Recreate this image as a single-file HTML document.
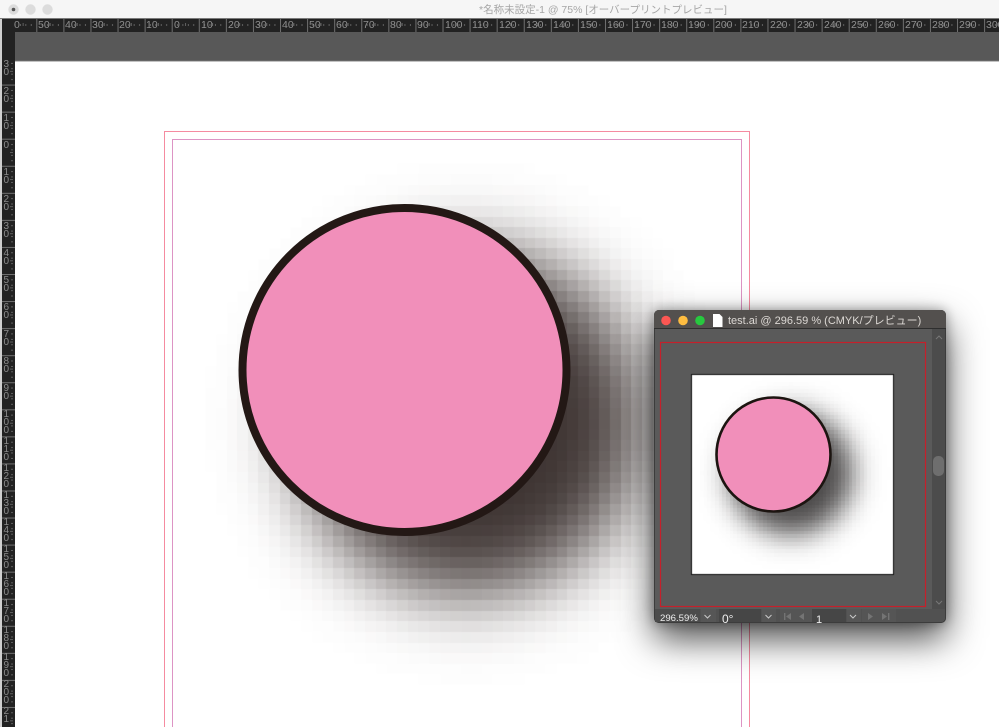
<!DOCTYPE html>
<html lang="ja"><head><meta charset="utf-8"><title>InDesign</title>
<style>
html,body{margin:0;padding:0;width:999px;height:727px;overflow:hidden;background:#fff;font-family:"Liberation Sans","Noto Sans CJK JP",sans-serif}
.a{position:absolute;display:block}
#stage{position:absolute;left:0;top:0;width:999px;height:727px;overflow:hidden}
#fb{position:absolute;left:300px;top:254px;width:336px;height:336px;border-radius:50%;background:#3a302e;filter:blur(36px)}
.win{position:absolute;left:654px;top:310px;width:292px;height:313px;background:#5a5a5a;border-radius:5px;box-shadow:0 16px 36px rgba(0,0,0,.7),0 0 12px rgba(0,0,0,.35),inset 0 0 0 1px #3c3c3c}
</style></head><body>
<div id="stage">
<div id="fb"></div>
<canvas id="c" class="a" width="999" height="727" style="left:0;top:0"></canvas>

<svg class="a" style="left:0;top:0" width="999" height="727" xmlns="http://www.w3.org/2000/svg">
<defs>
<pattern id="tt" x="171.7" y="0" width="27.08" height="13" patternUnits="userSpaceOnUse">
<rect x="0" y="0" width="1" height="13" fill="#707070"/>
<g fill="#6e6e6e"><rect x="5.4" y="11" width=".8" height="2"/><rect x="10.8" y="11" width=".8" height="2"/><rect x="13.5" y="10" width=".8" height="3"/><rect x="16.2" y="11" width=".8" height="2"/><rect x="21.6" y="11" width=".8" height="2"/></g>
</pattern>
<pattern id="tl" x="0" y="138.7" width="13" height="27.06" patternUnits="userSpaceOnUse">
<rect x="0" y="0" width="13" height="1" fill="#707070"/>
<g fill="#6e6e6e"><rect x="11" y="5.4" width="2" height=".8"/><rect x="11" y="10.8" width="2" height=".8"/><rect x="10" y="13.5" width="3" height=".8"/><rect x="11" y="16.2" width="2" height=".8"/><rect x="11" y="21.6" width="2" height=".8"/></g>
</pattern>
</defs>
<!-- page guides -->
<g fill="none">
<path d="M164.5 727V131.5H749.5V727" stroke="#f58ba0"/>
<path d="M172.5 727V139.5H741.5V727" stroke="#dd94c4"/>
</g>
<!-- big circle -->
<circle cx="404.5" cy="370" r="162" fill="#f18fba" stroke="#231815" stroke-width="8"/>
<!-- title bar -->
<rect x="0" y="0" width="999" height="18" fill="#f6f6f6"/>
<rect x="0" y="18" width="999" height="1" fill="#7a7a7a"/>
<circle cx="13.5" cy="9.5" r="5.2" fill="#dcdcdc"/><circle cx="13.5" cy="9.5" r="1.8" fill="#555"/>
<circle cx="30.5" cy="9.5" r="5.2" fill="#dcdcdc"/>
<circle cx="47.5" cy="9.5" r="5.2" fill="#dcdcdc"/>
<text x="479" y="13" font-size="10.5" fill="#a6a6a6" font-family="'Liberation Sans','Noto Sans CJK JP',sans-serif">*名称未設定-1 @ 75% [オーバープリントプレビュー]</text>
<!-- pasteboard -->
<rect x="15" y="31" width="984" height="29" fill="#585858"/>
<rect x="15" y="60" width="984" height="1.4" fill="#666"/>
<!-- top ruler -->
<rect x="2" y="19" width="997" height="13" fill="#222"/>
<rect x="15" y="19" width="984" height="13" fill="url(#tt)"/>
<rect x="2" y="32" width="13" height="29" fill="#222"/>
<g font-size="10.5" fill="#8e8e8e" font-family="'Liberation Sans',sans-serif">
<text x="14" y="28">0</text><text x="38" y="28">50</text><text x="65" y="28">40</text><text x="92" y="28">30</text><text x="119" y="28">20</text><text x="146" y="28">10</text><text x="174" y="28">0</text><text x="201" y="28">10</text><text x="228" y="28">20</text><text x="255" y="28">30</text><text x="282" y="28">40</text><text x="309" y="28">50</text><text x="336" y="28">60</text><text x="363" y="28">70</text><text x="390" y="28">80</text><text x="417" y="28">90</text><text x="445" y="28">100</text><text x="472" y="28">110</text><text x="499" y="28">120</text><text x="526" y="28">130</text><text x="553" y="28">140</text><text x="580" y="28">150</text><text x="607" y="28">160</text><text x="634" y="28">170</text><text x="661" y="28">180</text><text x="688" y="28">190</text><text x="715" y="28">200</text><text x="742" y="28">210</text><text x="770" y="28">220</text><text x="797" y="28">230</text><text x="824" y="28">240</text><text x="851" y="28">250</text><text x="878" y="28">260</text><text x="905" y="28">270</text><text x="932" y="28">280</text><text x="959" y="28">290</text><text x="986" y="28">300</text>
</g>
<!-- left ruler -->
<rect x="2" y="61" width="13" height="666" fill="#222"/>
<rect x="2" y="61" width="13" height="666" fill="url(#tl)"/>
<rect x="0" y="19" width="2" height="708" fill="#cfcfcf"/>
<g font-size="10" fill="#8c8c8c" font-family="'Liberation Sans',sans-serif" transform="translate(0.5,-1)">
<text x="3" y="68">3</text><text x="3" y="76">0</text>
<text x="3" y="95">2</text><text x="3" y="103">0</text>
<text x="3" y="122">1</text><text x="3" y="130">0</text>
<text x="3" y="149">0</text>
<text x="3" y="176">1</text><text x="3" y="184">0</text>
<text x="3" y="203">2</text><text x="3" y="211">0</text>
<text x="3" y="230">3</text><text x="3" y="238">0</text>
<text x="3" y="257">4</text><text x="3" y="265">0</text>
<text x="3" y="284">5</text><text x="3" y="292">0</text>
<text x="3" y="311">6</text><text x="3" y="319">0</text>
<text x="3" y="338">7</text><text x="3" y="346">0</text>
<text x="3" y="365">8</text><text x="3" y="373">0</text>
<text x="3" y="392">9</text><text x="3" y="400">0</text>
<text x="3" y="418">1</text><text x="3" y="426">0</text><text x="3" y="434">0</text>
<text x="3" y="445">1</text><text x="3" y="453">1</text><text x="3" y="461">0</text>
<text x="3" y="472">1</text><text x="3" y="480">2</text><text x="3" y="488">0</text>
<text x="3" y="499">1</text><text x="3" y="507">3</text><text x="3" y="515">0</text>
<text x="3" y="526">1</text><text x="3" y="534">4</text><text x="3" y="542">0</text>
<text x="3" y="553">1</text><text x="3" y="561">5</text><text x="3" y="569">0</text>
<text x="3" y="580">1</text><text x="3" y="588">6</text><text x="3" y="596">0</text>
<text x="3" y="607">1</text><text x="3" y="615">7</text><text x="3" y="623">0</text>
<text x="3" y="634">1</text><text x="3" y="642">8</text><text x="3" y="650">0</text>
<text x="3" y="661">1</text><text x="3" y="669">9</text><text x="3" y="677">0</text>
<text x="3" y="688">2</text><text x="3" y="696">0</text><text x="3" y="704">0</text>
<text x="3" y="715">2</text><text x="3" y="723">1</text>
</g>
</svg>

<div class="win"></div>
<canvas id="c2" class="a" width="999" height="727" style="left:0;top:0"></canvas>
<svg class="a" style="left:0;top:0" width="999" height="727" xmlns="http://www.w3.org/2000/svg">
<!-- small window title -->
<path d="M654 328V315a5 5 0 0 1 5-5H941a5 5 0 0 1 5 5V328Z" fill="#53504e"/>
<rect x="654" y="328" width="292" height="1" fill="#2e2e2e"/>
<circle cx="666" cy="320.5" r="4.8" fill="#fc5753"/>
<circle cx="683" cy="320.5" r="4.8" fill="#fdbc40"/>
<circle cx="700" cy="320.5" r="4.8" fill="#27c93f"/>
<path d="M713 314H719.5L722.5 317V327H713Z" fill="#fff"/>
<text x="728" y="324" font-size="11" fill="#dcd8d4" font-family="'Liberation Sans','Noto Sans CJK JP',sans-serif">test.ai @ 296.59 % (CMYK/プレビュー)</text>
<!-- scrollbar -->
<rect x="932" y="329" width="13" height="280" fill="#4c4c4c"/>
<path d="M936 339l3-3 3 3" fill="none" stroke="#777" stroke-width="1"/>
<path d="M936 601l3 3 3-3" fill="none" stroke="#777" stroke-width="1"/>
<rect x="933" y="456" width="11" height="20" rx="5" fill="#6e6e6e"/>
<!-- artboard -->
<rect x="660.5" y="342.5" width="265" height="264" fill="none" stroke="#c5202b" stroke-width="1.2"/>
<!-- status bar -->
<path d="M655 609H945V618a4 4 0 0 1-4 4H659a4 4 0 0 1-4-4Z" fill="#515151"/>
<rect x="655" y="609" width="45" height="13" fill="#4c4c4c"/>
<rect x="719" y="609" width="42" height="13" fill="#464646"/>
<rect x="812" y="609" width="34" height="13" fill="#464646"/>
<rect x="701" y="609" width="15" height="13" fill="#565656"/>
<rect x="762" y="609" width="14" height="13" fill="#565656"/>
<rect x="847" y="609" width="14" height="13" fill="#565656"/>
<rect x="780" y="609" width="32" height="13" fill="#555"/>
<rect x="862" y="609" width="34" height="13" fill="#555"/>
<g fill="none" stroke="#c8c8c8" stroke-width="1"><path d="M704.5 615l3 3 3-3"/><path d="M765.5 615l3 3 3-3"/><path d="M850 615l3 3 3-3"/></g>
<g fill="#747474"><rect x="784" y="613" width="1.4" height="7"/><path d="M791 613v7l-5-3.5Z"/><path d="M804 613v7l-5-3.5Z"/><path d="M868 613v7l5-3.5Z"/><path d="M882 613v7l5-3.5Z"/><rect x="888" y="613" width="1.4" height="7"/></g>
<g font-family="'Liberation Sans',sans-serif" fill="#eee">
<text x="660" y="621" font-size="9.6">296.59%</text>
<text x="722" y="623" font-size="12">0°</text>
<text x="816" y="623" font-size="11">1</text>
</g>
<!-- small circle -->
<circle cx="773.5" cy="454.5" r="57" fill="#f18fba" stroke="#1c1410" stroke-width="2.6"/>
</svg>
</div>
<script>
function erf(x){var s=x<0?-1:1;x=Math.abs(x);var t=1/(1+0.5*x);
var r=1-t*Math.exp(-x*x-1.26551223+t*(1.00002368+t*(0.37409196+t*(0.09678418+t*(-0.18628806+t*(0.27886807+t*(-1.13520398+t*(1.48851587+t*(-0.82215223+t*0.17087277)))))))));
return s*r;}
function shadow(ctx,ox,oy,step,cx,cy,R,sig,x1,y1,x2,y2,col,maxA){
 for(var i=Math.floor((x1-ox)/step);ox+i*step<x2;i++){
  for(var j=Math.floor((y1-oy)/step);oy+j*step<y2;j++){
   var xa=Math.max(x1,Math.round(ox+i*step)),xb=Math.min(x2,Math.round(ox+(i+1)*step));
   var ya=Math.max(y1,Math.round(oy+j*step)),yb=Math.min(y2,Math.round(oy+(j+1)*step));
   if(xb<=xa||yb<=ya)continue;
   var mx=ox+(i+.5)*step,my=oy+(j+.5)*step,r=Math.sqrt((mx-cx)*(mx-cx)+(my-cy)*(my-cy));
   var a=.5*(1-erf((r-R)/(sig*Math.SQRT2)))*maxA;
   if(a<.004)continue;
   ctx.fillStyle='rgba('+col+','+a.toFixed(3)+')';
   ctx.fillRect(xa,ya,xb-xa,yb-ya);
  }
 }
}
try{
 var c=document.getElementById('c').getContext('2d');
 shadow(c,311.7,536,10.65,468,422,168,36,15,61,999,727,'58,48,46',.98);
 var d=document.getElementById('c2').getContext('2d');
 d.fillStyle='#fff';d.fillRect(692,374,201,200);
 shadow(d,692.5,374.5,3.72,791,473,60,14,692,374,893,574,'66,64,64',.95);
 d.strokeStyle='#111';d.lineWidth=1;d.strokeRect(691.5,374.5,202,200);
 document.getElementById('fb').style.display='none';
}catch(e){}
</script>
</body></html>
